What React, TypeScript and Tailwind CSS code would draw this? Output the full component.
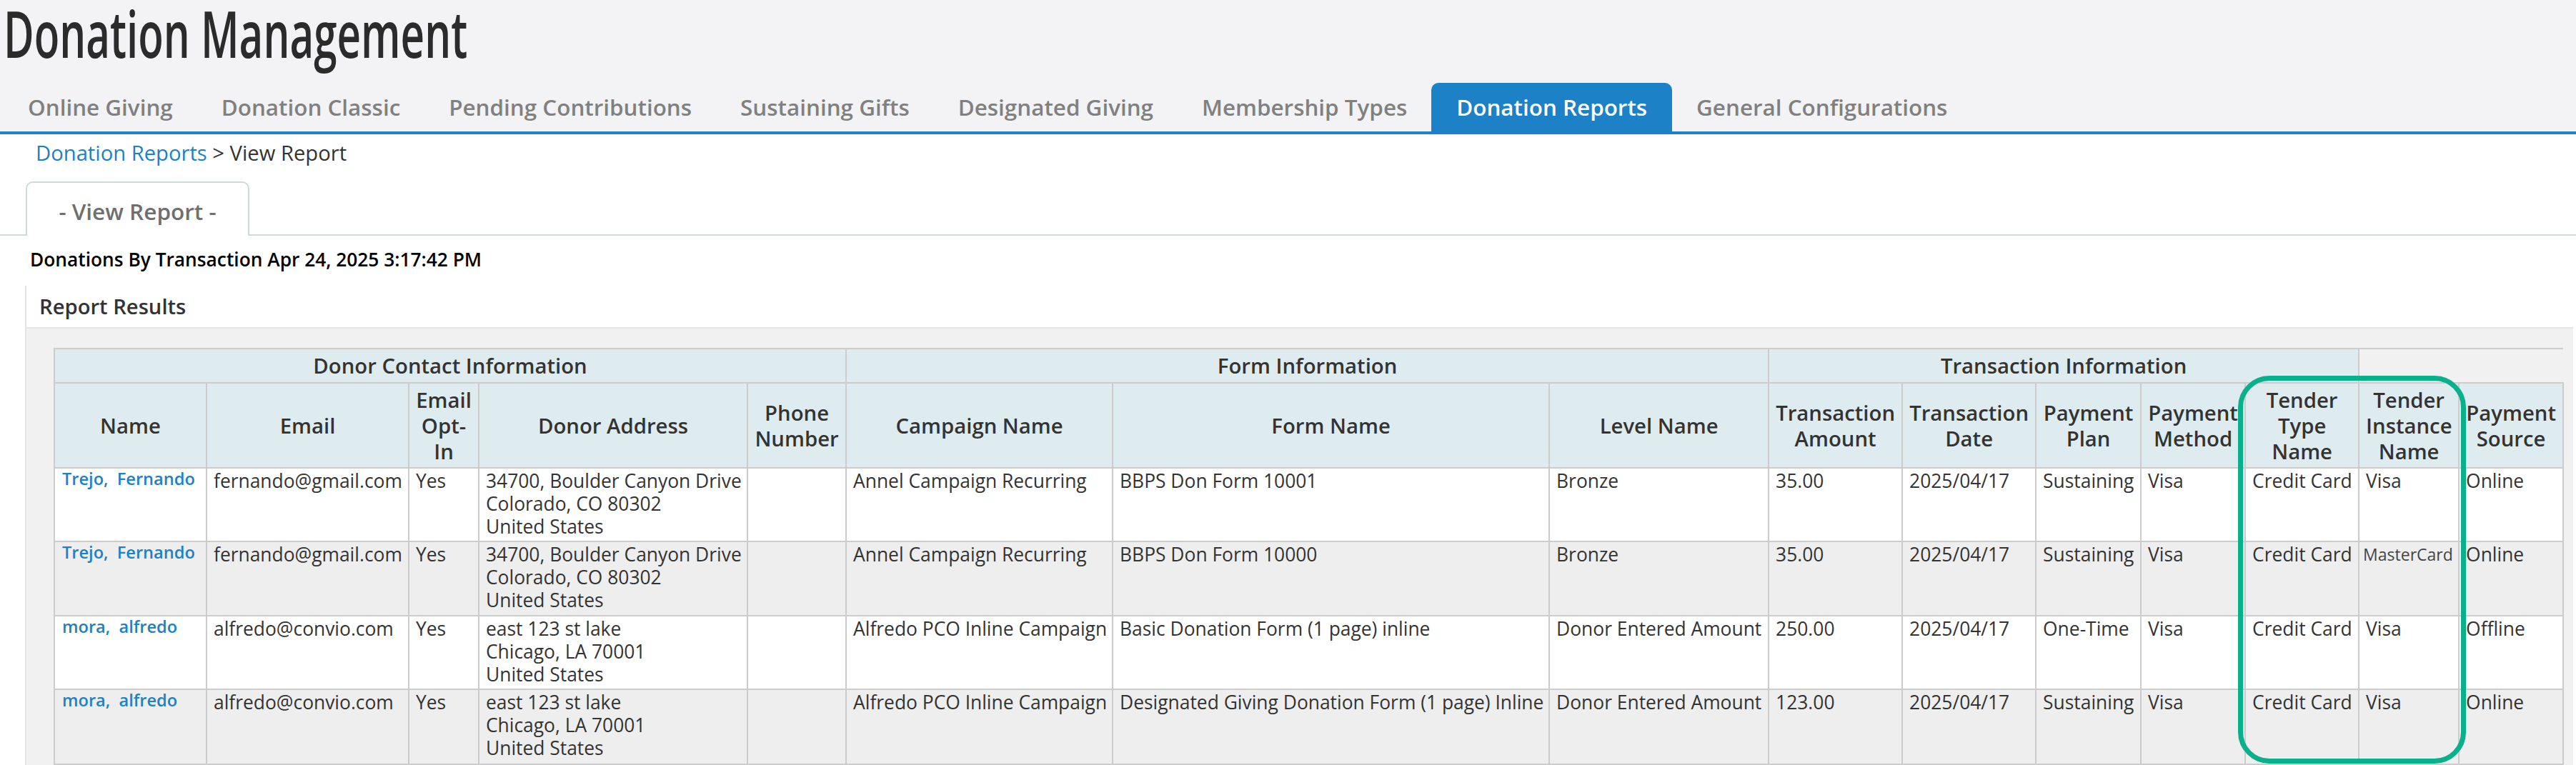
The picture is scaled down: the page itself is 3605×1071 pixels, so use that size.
const tabs = [
  "Online Giving",
  "Donation Classic",
  "Pending Contributions",
  "Sustaining Gifts",
  "Designated Giving",
  "Membership Types",
  "Donation Reports",
  "General Configurations",
];

const columns = [
  { label: "Name", width: "w-[213px]" },
  { label: "Email", width: "w-[283px]" },
  { label: "Email Opt-In", width: "w-[98px]" },
  { label: "Donor Address", width: "w-[376px]" },
  { label: "Phone Number", width: "w-[138px]" },
  { label: "Campaign Name", width: "w-[373px]" },
  { label: "Form Name", width: "w-[611px]" },
  { label: "Level Name", width: "w-[307px]" },
  { label: "Transaction Amount", width: "w-[187px]" },
  { label: "Transaction Date", width: "w-[187px]" },
  { label: "Payment Plan", width: "w-[147px]" },
  { label: "Payment Method", width: "w-[146px]" },
  { label: "Tender Type Name", width: "w-[159px]" },
  { label: "Tender Instance Name", width: "w-[140px]" },
  { label: "Payment Source", width: "w-[146px]" },
];

const fernando = {
  email: "fernando@gmail.com",
  address: ["34700, Boulder Canyon Drive", "Colorado, CO 80302", "United States"],
};
const alfredo = {
  email: "alfredo@convio.com",
  address: ["east 123 st lake", "Chicago, LA 70001", "United States"],
};

const rows = [
  { ...fernando, name: "Trejo,  Fernando", campaign: "Annel Campaign Recurring", form: "BBPS Don Form 10001", level: "Bronze", amount: "35.00", plan: "Sustaining", instance: "Visa", source: "Online", height: "h-[103px]" },
  { ...fernando, name: "Trejo,  Fernando", campaign: "Annel Campaign Recurring", form: "BBPS Don Form 10000", level: "Bronze", amount: "35.00", plan: "Sustaining", instance: "MasterCard", source: "Online", height: "h-[104px]" },
  { ...alfredo, name: "mora,  alfredo", campaign: "Alfredo PCO Inline Campaign", form: "Basic Donation Form (1 page) inline", level: "Donor Entered Amount", amount: "250.00", plan: "One-Time", instance: "Visa", source: "Offline", height: "h-[103px]" },
  { ...alfredo, name: "mora,  alfredo", campaign: "Alfredo PCO Inline Campaign", form: "Designated Giving Donation Form (1 page) Inline", level: "Donor Entered Amount", amount: "123.00", plan: "Sustaining", instance: "Visa", source: "Online", height: "h-[105px]" },
];

const groupCell = "border-2 border-[#cccccc] bg-[#dfecef] text-center align-middle text-[29.3px] font-semibold text-[#333333]";
const headCell = "border-2 border-[#cccccc] bg-[#dfecef] px-[9px] text-center align-middle text-[29.3px] leading-[36px] font-semibold text-[#333333]";
const bodyCell = "border-2 border-[#cccccc] px-[9px] pt-[1px] text-left align-top whitespace-nowrap";

export default function App() {
  return (
    <div className="h-[1071px] w-[3605px] overflow-hidden bg-white font-['Open_Sans',sans-serif] text-[26.4px] leading-[32px] text-[#333333]">
      <div className="h-[188px] border-b-4 border-[#1c81c6] bg-[#f3f3f5]">
        <div className="h-[116px] pl-[5px]">
          <h1 className="w-[1040px] origin-left scale-x-[0.64] text-[91px] leading-[92px] font-semibold whitespace-nowrap text-[#2b2b2b]">
            Donation Management
          </h1>
        </div>
        <ul className="flex h-[68px] pl-[5px]">
          {tabs.map((tab) =>
            tab === "Donation Reports" ? (
              <li key={tab} className="rounded-t-[10px] bg-[#1c81c6] px-[35px] pt-[14px] text-[31.4px] leading-[40px] font-semibold whitespace-nowrap text-white">
                {tab}
              </li>
            ) : (
              <li key={tab} className="px-[34px] pt-[14px] text-[31.4px] leading-[40px] font-semibold whitespace-nowrap text-[#808080]">
                {tab}
              </li>
            )
          )}
        </ul>
      </div>

      <div className="h-[66px] pt-[8px] pl-[50px] text-[29.2px] leading-[36px]">
        <a className="text-[#1c81c6]">Donation Reports</a> &gt; View Report
      </div>

      <div className="flex h-[76px] items-end">
        <div className="h-full w-[36px] border-b-2 border-[#d0dadd]" />
        <div className="h-full w-[313px] rounded-t-[10px] border-x-2 border-t-2 border-[#d0dadd] bg-white pt-[22px] text-center text-[31.5px] leading-[36px] font-semibold text-[#6f6f6f]">
          - View Report -
        </div>
        <div className="h-full flex-1 border-b-2 border-[#d0dadd]" />
      </div>

      <div className="h-[70px] pt-[16px] pl-[42px] text-[26.3px] leading-[34px] font-semibold text-black">
        Donations By Transaction Apr 24, 2025 3:17:42 PM
      </div>

      <div className="mr-[4px] ml-[35px] border-l-2 border-[#e3e3e3] bg-[#f1f1f1]">
        <div className="h-[60px] border-b-2 border-[#e5e5e5] bg-white pt-[11px] pl-[18px] text-[29.2px] leading-[36px] font-semibold text-[#333333]">
          Report Results
        </div>
        <div className="relative pt-[27px] pl-[38px]">
          <table className="w-[3513px] table-fixed border-collapse">
            <colgroup>
              {columns.map((col) => (
                <col key={col.label} className={col.width} />
              ))}
            </colgroup>
            <thead>
              <tr className="h-[48px]">
                <th colSpan={5} className={groupCell}>Donor Contact Information</th>
                <th colSpan={3} className={groupCell}>Form Information</th>
                <th colSpan={5} className={groupCell}>Transaction Information</th>
                <th colSpan={2} className="border-t-2 border-[#cccccc]" />
              </tr>
              <tr className="h-[119px]">
                {columns.map((col) => (
                  <th key={col.label} className={headCell}>{col.label}</th>
                ))}
              </tr>
            </thead>
            <tbody>
              {rows.map((row, i) => (
                <tr key={i} className={`${row.height} ${i % 2 === 1 ? "bg-[#eeeeee]" : "bg-white"}`}>
                  <td className={bodyCell}>
                    <a className="block pl-[1px] text-[23.6px] leading-[26px] font-semibold whitespace-pre text-[#1c81c6]">{row.name}</a>
                  </td>
                  <td className={bodyCell}>{row.email}</td>
                  <td className={bodyCell}>Yes</td>
                  <td className={bodyCell}>
                    {row.address.map((line) => (
                      <div key={line}>{line}</div>
                    ))}
                  </td>
                  <td className={bodyCell} />
                  <td className={bodyCell}>{row.campaign}</td>
                  <td className={bodyCell}>{row.form}</td>
                  <td className={bodyCell}>{row.level}</td>
                  <td className={bodyCell}>{row.amount}</td>
                  <td className={bodyCell}>2025/04/17</td>
                  <td className={bodyCell}>{row.plan}</td>
                  <td className={bodyCell}>Visa</td>
                  <td className={bodyCell}>Credit Card</td>
                  {row.instance === "MasterCard" ? (
                    <td className="border-2 border-[#cccccc] px-[5px] pt-[1px] text-left align-top text-[23px] leading-[32px] whitespace-nowrap text-[#444444]">
                      {row.instance}
                    </td>
                  ) : (
                    <td className={bodyCell}>{row.instance}</td>
                  )}
                  <td className={bodyCell}>{row.source}</td>
                </tr>
              ))}
            </tbody>
          </table>
          <div className="absolute top-[66px] left-[3095px] h-[543px] w-[319px] rounded-[44px] border-[7px] border-[#09b08c]" />
        </div>
      </div>
    </div>
  );
}
